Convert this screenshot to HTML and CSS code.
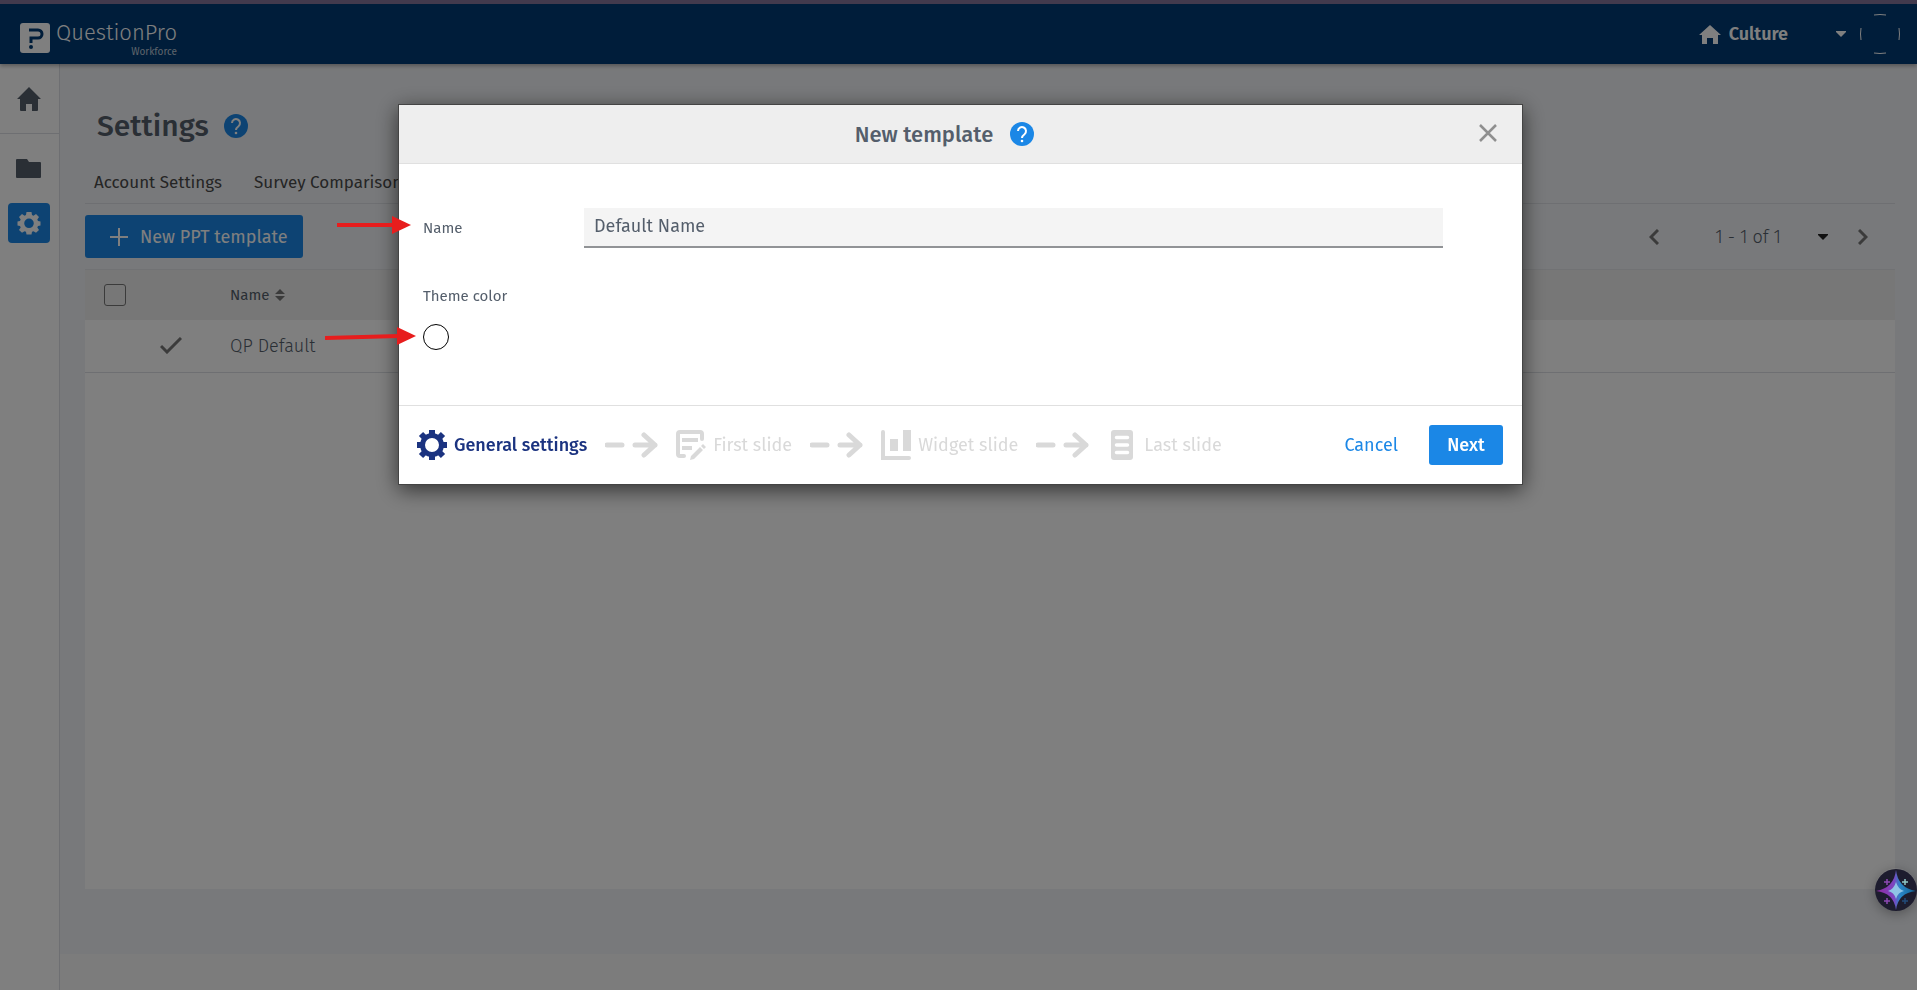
FILE: index.html
```html
<!DOCTYPE html>
<html lang="en">
<head>
    <meta charset="UTF-8">
    <meta name="viewport" content="width=device-width, initial-scale=1.0">
    <title>Settings - QuestionPro Workforce</title>
    <link rel="stylesheet" href="styles.css">
</head>
<body>
    <div class="app">
        <header class="topbar">
            <a class="logo" href="#" aria-label="QuestionPro Workforce">
                <svg class="logo-mark" viewBox="0 0 30 30">
                    <rect width="30" height="30" rx="3" fill="#fff"/>
                    <path d="M9 7h9a4 4 0 0 1 0 8h-7v5" fill="none" stroke="#003a74" stroke-width="3"/>
                    <circle cx="11" cy="24" r="2" fill="#003a74"/>
                </svg>
                <span class="logo-text">
                    <span class="logo-name">QuestionPro</span>
                    <span class="logo-product">Workforce</span>
                </span>
            </a>
            <div class="topbar-right">
                <button class="product-switch" type="button">
                    <svg width="22" height="19" viewBox="0 0 22 19"><path d="M11 0 22 10h-3v9h-5v-6H8v6H3v-9H0z" fill="#fff"/></svg>
                    <span>Culture</span>
                    <svg class="switch-caret" width="10" height="6" viewBox="0 0 10 6"><path d="M0 0h10v1L5 6 0 1z" fill="#fff"/></svg>
                </button>
                <svg class="avatar" viewBox="0 0 40 40">
                    <path d="M14 1q6-1 12 0M14 39q6 1 12 0M1 14q-1 6 0 12M39 14q1 6 0 12" fill="none" stroke="#fff" stroke-width="1"/>
                </svg>
            </div>
        </header>

        <div class="body-row">
            <nav class="sidebar">
                <a class="side-home" href="#" aria-label="Home">
                    <svg width="24" height="24" viewBox="0 0 24 24"><path d="M12 0 24 12h-3v11q0 1-1 1h-5v-7H9v7H4q-1 0-1-1V12H0z" fill="#545e6b"/></svg>
                </a>
                <a class="side-folder" href="#" aria-label="Folder">
                    <svg width="25" height="19" viewBox="0 0 25 19"><path d="M1 0h10l2 3h11q1 0 1 1v14q0 1-1 1H1q-1 0-1-1V1q0-1 1-1z" fill="#545e6b"/></svg>
                </a>
                <a class="side-settings" href="#" aria-label="Settings">
                    <svg width="24" height="24" viewBox="0 0 24 24"><path fill="#fff" fill-rule="evenodd" d="M9.500 1h5l.5 3 1.500.7L19 3l3 3-1.700 2.500.7 1.500 2.500.500v4L21 15l-.7 1.500L22 19l-3 2.800-2.500-1.600-1.500.6-.5 2.700h-5L9 20.800l-1.500-.6L5 21.800 2 19l1.700-2.500L3 15l-2.500-.5v-4L3 10l.7-1.500L2 6l3-3 2.500 1.700L9 4zM12 7.500a4.800 4.800 0 1 0 0 9.600 4.800 4.800 0 0 0 0-9.600z"/></svg>
                </a>
            </nav>

            <div class="content">
                <main class="page">
                    <div class="page-title">
                        <h1>Settings</h1>
                        <button class="help" type="button" aria-label="Help">
                            <svg viewBox="0 0 24 24"><circle cx="12" cy="12" r="12" fill="#1b87e6"/><path d="M8 9a4 4 0 1 1 6.500 3.200Q12 14 12 16" fill="none" stroke="#fff" stroke-width="2"/><circle cx="12" cy="19" r="1.300" fill="#fff"/></svg>
                        </button>
                    </div>
                    <div class="tabs">
                        <a href="#">Account Settings</a>
                        <a href="#">Survey Comparison</a>
                    </div>
                    <div class="toolbar">
                        <button class="btn-new" type="button">
                            <svg width="18" height="18" viewBox="0 0 18 18"><path d="M9 0v18M0 9h18" stroke="#fff" stroke-width="2"/></svg>
                            New PPT template
                        </button>
                        <div class="pager">
                            <button type="button" aria-label="Previous"><svg width="10" height="16" viewBox="0 0 10 16"><path d="M9 1 2 8l7 7" fill="none" stroke="#777" stroke-width="3"/></svg></button>
                            <span class="pager-text">1 - 1 of 1</span>
                            <button class="pager-caret" type="button" aria-label="Choose page"><svg width="10" height="6" viewBox="0 0 10 6"><path d="M0 0h10v1L5 6 0 1z" fill="#222"/></svg></button>
                            <button type="button" aria-label="Next page"><svg width="10" height="16" viewBox="0 0 10 16"><path d="m1 1 7 7-7 7" fill="none" stroke="#777" stroke-width="3"/></svg></button>
                        </div>
                    </div>
                    <div class="panel">
                        <table class="templates">
                            <thead>
                                <tr>
                                    <th class="col-check"><input type="checkbox" aria-label="Select all"></th>
                                    <th class="col-default"></th>
                                    <th>Name
                                        <svg class="sort" width="10" height="12" viewBox="0 0 10 12"><path d="M0 5 5 0l5 5zM0 7h10l-5 5z" fill="#777"/></svg>
                                    </th>
                                </tr>
                            </thead>
                            <tbody>
                                <tr>
                                    <td></td>
                                    <td class="col-default"><svg width="22" height="17" viewBox="0 0 22 17"><path d="m1 9 6 6L21 1" fill="none" stroke="#777" stroke-width="3"/></svg></td>
                                    <td>QP Default</td>
                                </tr>
                            </tbody>
                        </table>
                    </div>
                </main>
            </div>
        </div>
    </div>

    <div class="overlay">
        <form class="modal" role="dialog" aria-labelledby="modalTitle">
            <div class="modal-header">
                <h2 id="modalTitle">New template</h2>
                <button class="help" type="button" aria-label="Help">
                    <svg viewBox="0 0 24 24"><circle cx="12" cy="12" r="12" fill="#1b87e6"/><path d="M8 9a4 4 0 1 1 6.500 3.200Q12 14 12 16" fill="none" stroke="#fff" stroke-width="2"/><circle cx="12" cy="19" r="1.300" fill="#fff"/></svg>
                </button>
                <button class="close" type="button" aria-label="Close">
                    <svg width="18" height="18" viewBox="0 0 18 18"><path d="m1 1 16 16M17 1 1 17" stroke="#8f8f8f" stroke-width="2.500"/></svg>
                </button>
            </div>

            <div class="modal-body">
                <div class="field">
                    <svg class="pointer pointer-name" width="74" height="20" viewBox="0 0 74 20"><path d="M0 10h57" stroke="#e71d1d" stroke-width="4"/><path d="M55 1v18l19-9z" fill="#e71d1d"/></svg>
                    <label for="templateName">Name</label>
                    <input type="text" id="templateName" value="Default Name">
                </div>
                <div class="field-color">
                    <label for="themeColor">Theme color</label>
                    <div class="color-row">
                        <svg class="pointer pointer-color" width="91" height="20" viewBox="0 0 91 20"><path d="m0 12 74-2" stroke="#e71d1d" stroke-width="4"/><path d="M72 1v18l19-9z" fill="#e71d1d"/></svg>
                        <button class="swatch" id="themeColor" type="button"></button>
                    </div>
                </div>
            </div>

            <div class="modal-footer">
                <div class="step active">
                    <svg width="30" height="30" viewBox="0 0 30 30"><circle cx="15" cy="15" r="9.500" fill="none" stroke="#1b3380" stroke-width="5"/><g stroke="#1b3380" stroke-width="6"><path d="M15 0v5M15 25v5M0 15h5M25 15h5M4 4l4 4M22 22l4 4M26 4l-4 4M8 22l-4 4"/></g></svg>
                    <span>General settings</span>
                </div>
                <svg class="step-arrow" viewBox="0 0 53 26"><path d="M2 13h15M30 13h20M39 3l11 10-11 10" fill="none" stroke="#d9d9d9" stroke-width="5" stroke-linecap="round" stroke-linejoin="round"/></svg>
                <div class="step">
                    <svg width="30" height="30" viewBox="0 0 30 30"><path d="M26 9V4q0-2-2-2H4Q2 2 2 4v20q0 2 2 2h4" fill="none" stroke="#d9d9d9" stroke-width="4" stroke-linecap="round"/><path d="M6 10h16M6 18h10" stroke="#d9d9d9" stroke-width="4"/><path d="m14 30 1-4 9-9 3 3-9 9zM25 16l2-2 3 3-2 2z" fill="#d9d9d9"/></svg>
                    <span>First slide</span>
                </div>
                <svg class="step-arrow" viewBox="0 0 53 26"><path d="M2 13h15M30 13h20M39 3l11 10-11 10" fill="none" stroke="#d9d9d9" stroke-width="5" stroke-linecap="round" stroke-linejoin="round"/></svg>
                <div class="step">
                    <svg width="30" height="30" viewBox="0 0 30 30"><path d="M2 2v26h26" fill="none" stroke="#d9d9d9" stroke-width="4" stroke-linecap="round"/><path d="M9 9h8v12H9zM22 0h8v21h-8z" fill="#d9d9d9"/></svg>
                    <span>Widget slide</span>
                </div>
                <svg class="step-arrow" viewBox="0 0 53 26"><path d="M2 13h15M30 13h20M39 3l11 10-11 10" fill="none" stroke="#d9d9d9" stroke-width="5" stroke-linecap="round" stroke-linejoin="round"/></svg>
                <div class="step">
                    <svg width="30" height="30" viewBox="0 0 30 30"><rect x="4" width="22" height="30" rx="3" fill="#d9d9d9"/><path d="M9.500 7.500h11M9.500 15h11M9.500 22.500h11" stroke="#fff" stroke-width="3.500" stroke-linecap="round"/></svg>
                    <span>Last slide</span>
                </div>
                <div class="actions">
                    <button class="btn-cancel" type="button">Cancel</button>
                    <button class="btn-next" type="submit">Next</button>
                </div>
            </div>
        </form>
    </div>

    <button class="assistant" type="button" aria-label="Assistant">
        <svg viewBox="0 0 42 42">
            <defs>
                <linearGradient id="star" x1="0" x2="1">
                    <stop offset="0" stop-color="#8f2aa0"/>
                    <stop offset=".45" stop-color="#7d45c0"/>
                    <stop offset=".6" stop-color="#2a86c8"/>
                    <stop offset="1" stop-color="#12608f"/>
                </linearGradient>
            </defs>
            <circle cx="21" cy="21" r="21" fill="#1d1c2e"/>
            <path d="M21 1q2 18 20 21-18 2-20 19Q19 24 1 22 19 19 21 1z" fill="url(#star)"/>
            <path d="M21 13q2 7 8 9-6 1-8 8-2-7-8-8 6-2 8-9z" fill="#8fc4e6"/>
            <path d="M12 10v6M9 13h6M12 29v6M9 32h6" stroke="#8d49b4" stroke-width="1.500"/>
            <path d="M30 10v6M27 13h6" stroke="#8fc6c6" stroke-width="1.500"/>
            <path d="M30 29v6M27 32h6" stroke="#234b7a" stroke-width="1.500"/>
        </svg>
    </button>
</body>
</html>
```
FILE: styles.css
```css
* {
    box-sizing: border-box;
}
body {
    margin: 0;
    font-family: "Fira Sans", Roboto, "Noto Sans", sans-serif;
    font-size: 18px;
    color: #545e6b;
}
button {
    font: inherit;
    border: 0;
    padding: 0;
    background: none;
    cursor: pointer;
}
a {
    color: inherit;
    text-decoration: none;
}
svg {
    display: block;
    flex: none;
}
h1, h2 {
    margin: 0;
    font-weight: 500;
}
.app {
    display: flex;
    flex-direction: column;
    min-height: 100vh;
}

/* top bar */
.topbar {
    display: flex;
    align-items: center;
    justify-content: space-between;
    height: 64px;
    padding: 0 17px 0 20px;
    background: #003a74;
    border-top: 4px solid #85749a;
    color: #fff;
    box-shadow: 0 2px 4px rgba(0, 0, 0, 0.3);
    z-index: 1;
}
.logo {
    display: flex;
    align-items: center;
    gap: 6px;
    padding-top: 8px;
}
.logo-mark {
    width: 30px;
    height: 30px;
}
.logo-text {
    display: flex;
    flex-direction: column;
    align-items: flex-end;
}
.logo-name {
    font-size: 22px;
    line-height: 28px;
    font-weight: 300;
}
.logo-product {
    font-size: 10px;
    line-height: 10px;
    color: #bcc8d6;
}
.topbar-right {
    display: flex;
    align-items: center;
    gap: 14px;
}
.product-switch {
    display: flex;
    align-items: center;
    gap: 8px;
    color: #fff;
    font-weight: 600;
}
.switch-caret {
    margin-left: 40px;
}
.avatar {
    width: 40px;
    height: 40px;
}

/* left menu */
.body-row {
    display: flex;
    flex: 1;
}
.sidebar {
    width: 60px;
    flex: none;
    background: #fff;
    border-right: 1px solid #dcdfe4;
}
.sidebar a {
    display: flex;
    align-items: center;
    justify-content: center;
}
.side-home {
    height: 70px;
    padding-right: 2px;
    border-bottom: 1px solid #dcdfe4;
}
.side-folder {
    height: 69px;
    padding-right: 2px;
}
.sidebar .side-settings {
    width: 42px;
    height: 40px;
    margin-left: 8px;
    border-radius: 4px;
    background: #1b87e6;
}

/* page */
.content {
    display: flex;
    flex-direction: column;
    flex: 1;
    padding-bottom: 36px;
    background: #f9f9f9;
}
.page {
    display: flex;
    flex-direction: column;
    flex: 1;
    padding: 40px 22px 65px 25px;
    background: #f1f3f6;
}
.page-title {
    display: flex;
    align-items: center;
    gap: 15px;
    height: 44px;
    padding-left: 12px;
}
.page-title h1 {
    font-size: 30px;
}
.help,
.help svg {
    width: 24px;
    height: 24px;
}
.tabs {
    display: flex;
    gap: 32px;
    height: 56px;
    padding: 24px 9px 0;
    font-size: 17px;
    line-height: 22px;
    border-bottom: 1px solid #dcdfe4;
    color: #4a4a4a;
}
.toolbar {
    display: flex;
    align-items: center;
    justify-content: space-between;
    height: 65px;
    padding-right: 27px;
}
.btn-new {
    display: flex;
    align-items: center;
    gap: 12px;
    height: 43px;
    padding: 0 15px 0 25px;
    border-radius: 3px;
    background: #1b87e6;
    color: #fff;
}
.pager {
    display: flex;
    align-items: center;
    font-weight: 300;
}
.pager-text {
    margin: 0 37px 0 56px;
}
.pager-caret {
    margin-right: 30px;
}
.panel {
    flex: 1;
    background: #fff;
}
.templates {
    width: 100%;
    border-collapse: collapse;
    text-align: left;
}
.templates th {
    height: 50px;
    padding: 0;
    background: #eee;
    border-top: 1px solid #e3e5e8;
    font-size: 15px;
    font-weight: 400;
}
.templates td {
    height: 53px;
    padding: 0;
    border-bottom: 1px solid #dcdfe4;
    font-weight: 300;
}
.templates .col-check {
    width: 70px;
    padding-left: 19px;
}
.templates .col-default {
    width: 75px;
    padding-left: 5px;
}
.templates input {
    display: block;
    appearance: none;
    width: 22px;
    height: 22px;
    margin: 0;
    border: 1px solid #777;
    border-radius: 3px;
}
.sort {
    display: inline-block;
    margin-left: 2px;
    vertical-align: -1px;
}

/* modal */
.overlay {
    position: fixed;
    inset: 0;
    z-index: 10;
    padding: 104px 0 0 4px;
    background: rgba(0, 0, 0, 0.5);
}
.modal {
    width: 1125px;
    max-width: 90%;
    margin: 0 auto;
    border: 1px solid #444;
    background: #fff;
    box-shadow: 0 5px 20px rgba(0, 0, 0, 0.6);
}
.modal-header {
    position: relative;
    display: flex;
    align-items: center;
    justify-content: center;
    gap: 17px;
    height: 59px;
    padding-right: 32px;
    background: #eee;
    border-bottom: 1px solid #e0e0e0;
}
.modal-header h2 {
    font-size: 22px;
}
.close {
    position: absolute;
    right: 25px;
    top: 19px;
}
.modal-body {
    height: 241px;
    padding: 44px 79px 0 24px;
}
.modal-body label {
    font-size: 15px;
}
.field {
    position: relative;
    display: flex;
    align-items: center;
}
.field label {
    width: 161px;
}
.field input {
    flex: 1;
    height: 40px;
    padding: 0 10px 2px;
    border: 0;
    border-bottom: 2px solid #919396;
    background: #f4f4f4;
    color: #545e6b;
    font: inherit;
}
.field-color {
    padding-top: 38px;
}
.field-color label {
    display: block;
    line-height: 20px;
}
.color-row {
    position: relative;
    margin-top: 18px;
}
.swatch {
    display: block;
    width: 26px;
    height: 26px;
    border: 1px solid #000;
    border-radius: 50%;
}
.pointer {
    position: absolute;
}
.pointer-name {
    left: -86px;
    top: 7px;
}
.pointer-color {
    left: -98px;
    top: 2px;
}
.modal-footer {
    display: flex;
    align-items: center;
    gap: 18px;
    height: 79px;
    padding: 0 19px 0 18px;
    border-top: 1px solid #e0e0e0;
}
.step {
    display: flex;
    align-items: center;
    gap: 7px;
    color: #d9d9d9;
    white-space: nowrap;
}
.step.active {
    color: #1b3380;
    font-weight: 500;
}
.step-arrow {
    width: 53px;
    height: 26px;
}
.actions {
    display: flex;
    align-items: center;
    gap: 31px;
    margin-left: auto;
}
.btn-cancel {
    color: #1b87e6;
}
.btn-next {
    height: 40px;
    width: 74px;
    border-radius: 3px;
    background: #1b87e6;
    color: #fff;
    font-weight: 500;
}

/* floating assistant */
.assistant {
    position: fixed;
    right: 0;
    bottom: 79px;
    z-index: 11;
    width: 42px;
    height: 43px;
    border-radius: 50%;
    box-shadow: 0 3px 12px rgba(0, 0, 0, 0.3);
}
```
